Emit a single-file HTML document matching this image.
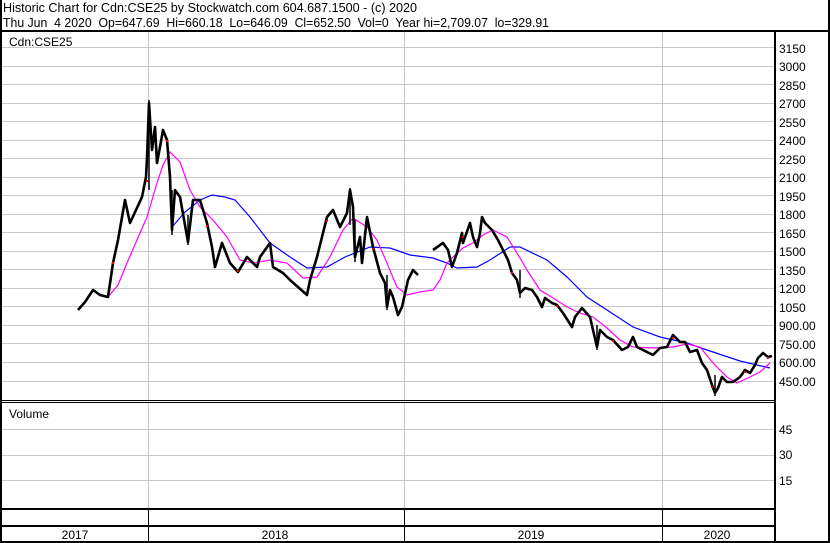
<!DOCTYPE html>
<html><head><meta charset="utf-8"><style>
html,body{margin:0;padding:0;background:#fff}
svg{display:block}
text{font-family:"Liberation Sans",Arial,sans-serif;font-size:12px;fill:#000;white-space:pre}
.h{font-size:12.7px}
</style></head><body>
<svg width="830" height="543" viewBox="0 0 830 543" xmlns="http://www.w3.org/2000/svg" xml:space="preserve">
<rect x="0" y="0" width="830" height="543" fill="#fff"/>
<text class="h" x="3" y="12" textLength="414" lengthAdjust="spacingAndGlyphs">Historic Chart for Cdn:CSE25 by Stockwatch.com 604.687.1500 - (c) 2020</text>
<text class="h" x="3" y="27" textLength="546" lengthAdjust="spacingAndGlyphs">Thu Jun  4 2020  Op=647.69  Hi=660.18  Lo=646.09  Cl=652.50  Vol=0  Year hi=2,709.07  lo=329.91</text>
<g stroke="#c8c8c8" stroke-width="1">
<line x1="2" x2="774" y1="47.5" y2="47.5"/><line x1="2" x2="774" y1="66.5" y2="66.5"/><line x1="2" x2="774" y1="84.5" y2="84.5"/><line x1="2" x2="774" y1="103.5" y2="103.5"/><line x1="2" x2="774" y1="121.5" y2="121.5"/><line x1="2" x2="774" y1="140.5" y2="140.5"/><line x1="2" x2="774" y1="158.5" y2="158.5"/><line x1="2" x2="774" y1="177.5" y2="177.5"/><line x1="2" x2="774" y1="195.5" y2="195.5"/><line x1="2" x2="774" y1="214.5" y2="214.5"/><line x1="2" x2="774" y1="232.5" y2="232.5"/><line x1="2" x2="774" y1="251.5" y2="251.5"/><line x1="2" x2="774" y1="269.5" y2="269.5"/><line x1="2" x2="774" y1="288.5" y2="288.5"/><line x1="2" x2="774" y1="306.5" y2="306.5"/><line x1="2" x2="774" y1="325.5" y2="325.5"/><line x1="2" x2="774" y1="343.5" y2="343.5"/><line x1="2" x2="774" y1="362.5" y2="362.5"/><line x1="2" x2="774" y1="381.5" y2="381.5"/>
<line x1="2" x2="774" y1="429.5" y2="429.5"/><line x1="2" x2="774" y1="455.5" y2="455.5"/><line x1="2" x2="774" y1="480.5" y2="480.5"/>
<line x1="148.5" x2="148.5" y1="32" y2="509"/><line x1="404.5" x2="404.5" y1="32" y2="509"/><line x1="662.5" x2="662.5" y1="32" y2="509"/>
</g>
<g fill="#000">
<rect x="0" y="0" width="2" height="543"/>
<rect x="828" y="0" width="2" height="543"/>
<rect x="0" y="30" width="830" height="2"/>
<rect x="774" y="30" width="2" height="513"/>
<rect x="0" y="400" width="774" height="1"/>
<rect x="0" y="402" width="774" height="1"/>
<rect x="0" y="508" width="774" height="2"/>
<rect x="0" y="525" width="774" height="2"/>
<rect x="0" y="541" width="830" height="2"/>
<rect x="148" y="510" width="1" height="31"/>
<rect x="404" y="510" width="1" height="31"/>
<rect x="662" y="510" width="1" height="31"/>
</g>
<text x="9" y="46">Cdn:CSE25</text>
<text x="9" y="418">Volume</text>
<g>
<text x="779" y="53">3150</text><text x="779" y="71">3000</text><text x="779" y="90">2850</text><text x="779" y="108">2700</text><text x="779" y="127">2550</text><text x="779" y="145">2400</text><text x="779" y="164">2250</text><text x="779" y="182">2100</text><text x="779" y="201">1950</text><text x="779" y="219">1800</text><text x="779" y="238">1650</text><text x="779" y="256">1500</text><text x="779" y="275">1350</text><text x="779" y="293">1200</text><text x="779" y="312">1050</text><text x="779" y="330">900.00</text><text x="779" y="349">750.00</text><text x="779" y="367">600.00</text><text x="779" y="386">450.00</text>
<text x="779" y="434">45</text><text x="779" y="459">30</text><text x="779" y="485">15</text>
</g>
<text x="75" y="539" text-anchor="middle">2017</text>
<text x="275" y="539" text-anchor="middle">2018</text>
<text x="531" y="539" text-anchor="middle">2019</text>
<text x="717" y="539" text-anchor="middle">2020</text>
<polyline fill="none" stroke="#0000ff" stroke-width="1.2" points="172,227 185,212 200,200 212,195 225,197 235,200 250,217 270,243 290,257 307,268 327,267 345,257 370,247 390,248 410,255 433,258 447,263 457,268 477,267 490,260 510,247 520,247 547,260 567,277 587,297 607,310 633,327 660,337 687,343 707,350 740,361 770,368"/>
<polyline fill="none" stroke="#ff00ff" stroke-width="1.2" points="108,297 118,285 127,263 137,240 147,217 157,183 163,165 170,152 180,162 190,190 200,207 213,220 227,237 240,260 253,263 270,260 287,263 303,278 317,277 330,257 343,230 353,218 367,227 377,240 387,263 397,287 407,295 420,292 433,290 440,280 447,263 453,257 463,248 473,243 483,235 493,230 507,237 517,253 527,270 540,290 553,298 567,307 580,313 593,317 607,328 620,340 633,347 653,348 673,347 687,344 700,347 713,363 727,377 737,383 750,377 760,372 770,363"/>
<g fill="none" stroke="#000" stroke-width="2.6" stroke-linejoin="round">
<polyline points="78,310 85,302 93,290 100,295 108,297 113,263 118,240 125,200 130,223 136,210 142,197 146,177 147,158 149,103 152,150 155,127 157,163 160,147 163,130 167,140 170,177 172,230 175,190 180,197 188,242 193,200 200,200 207,223 212,247 215,267 222,243 230,263 238,272 247,257 257,267 260,257 270,243 273,267 283,273 290,280 307,295 310,280 317,257 327,217 333,210 340,227 347,213 350,190 353,207 355,257 360,237 362,263 367,217 373,247 380,273 385,283 387,307 390,290 393,297 398,315 402,307 408,280 413,270 418,275"/>
<polyline points="433,250 443,243 448,250 452,267 457,253 462,233 463,243 470,223 473,237 477,247 480,233 482,217 485,223 492,230 498,240 503,250 508,260 512,273 517,280 520,293 525,288 532,290 537,297 542,307 545,298 552,303 557,305 563,313 572,327 575,317 582,308 590,317 593,330 597,347 600,330 607,337 613,340 622,350 628,347 633,337 637,347 643,350 653,355 660,348 667,347 673,335 680,342 685,342 690,352 697,350 702,363 707,370 712,385 715,393 718,388 722,377 727,382 733,382 740,377 745,370 750,373 755,365 758,358 763,353 768,357 772,356"/>
</g>
<g stroke="#000" stroke-width="1.5">
<line x1="149" y1="100" x2="149" y2="190"/><line x1="172" y1="190" x2="172" y2="235"/><line x1="188" y1="215" x2="188" y2="245"/><line x1="350" y1="188" x2="350" y2="225"/><line x1="355" y1="220" x2="355" y2="262"/><line x1="387" y1="275" x2="387" y2="310"/><line x1="520" y1="270" x2="520" y2="298"/><line x1="597" y1="325" x2="597" y2="350"/><line x1="715" y1="375" x2="715" y2="396"/>
</g>
<g fill="#ff0000">
<rect x="112" y="262" width="2" height="2"/><rect x="146" y="180" width="2" height="2"/><rect x="166" y="140" width="2" height="2"/><rect x="206" y="225" width="2" height="2"/><rect x="237" y="270" width="2" height="2"/><rect x="326" y="220" width="2" height="2"/><rect x="372" y="248" width="2" height="2"/><rect x="462" y="236" width="2" height="2"/><rect x="511" y="272" width="2" height="2"/><rect x="556" y="305" width="2" height="2"/><rect x="612" y="340" width="2" height="2"/><rect x="672" y="337" width="2" height="2"/><rect x="711" y="386" width="2" height="2"/><rect x="744" y="371" width="2" height="2"/><rect x="767" y="357" width="2" height="2"/>
</g>
</svg>
</body></html>
